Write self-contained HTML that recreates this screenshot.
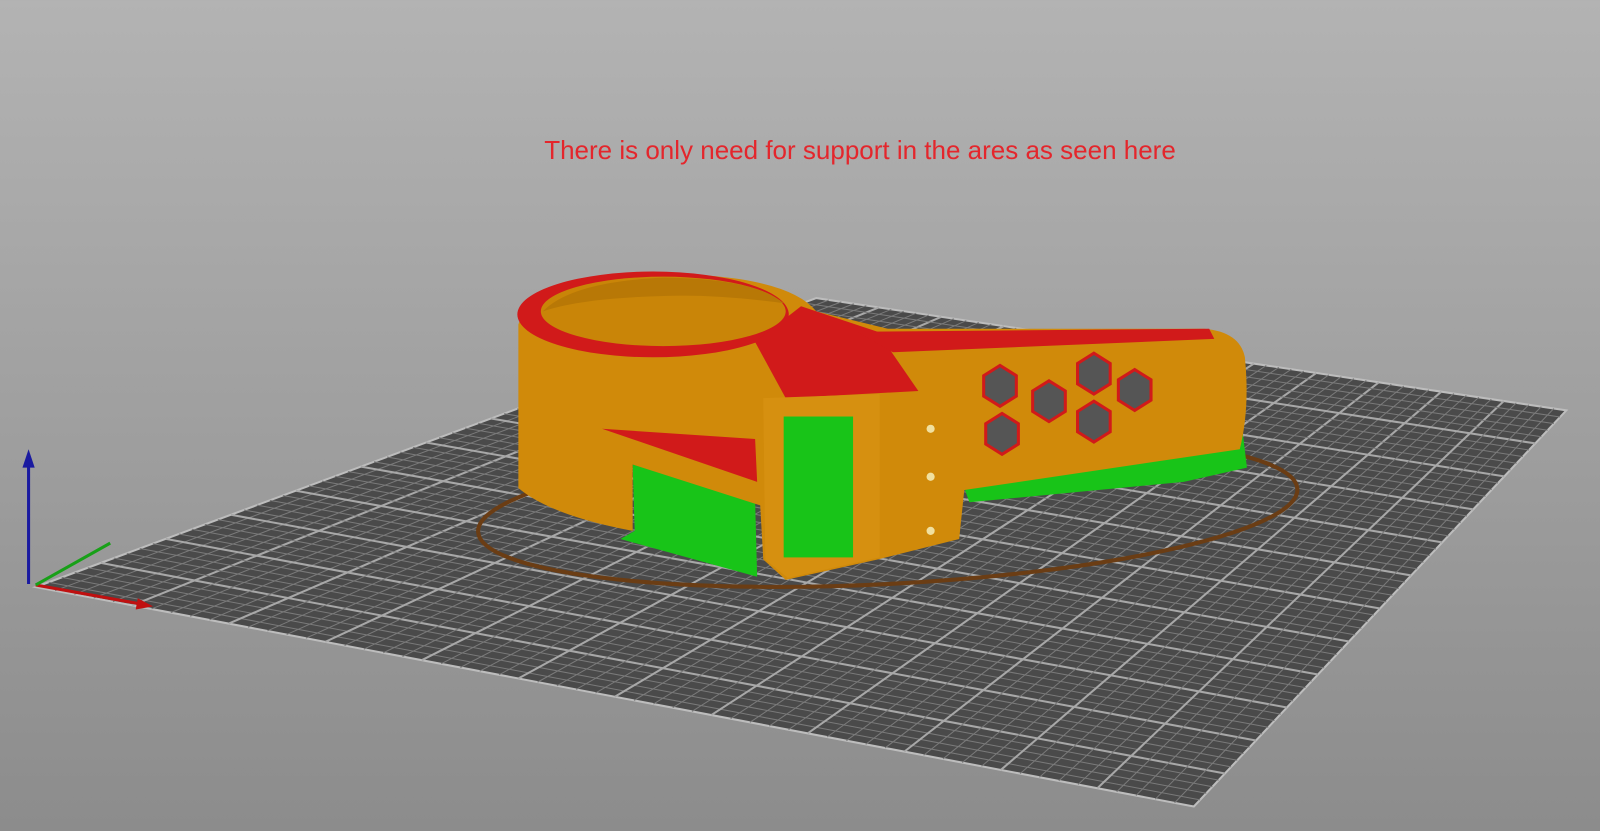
<!DOCTYPE html>
<html><head><meta charset="utf-8"><style>
html,body{margin:0;padding:0;width:1600px;height:831px;overflow:hidden}
body{background:linear-gradient(#b3b3b3,#8c8c8c)}
svg{position:absolute;left:0;top:0}
.t{position:absolute;left:0;width:1720px;top:135px;text-align:center;font:26px "Liberation Sans",sans-serif;color:#e4262c}
</style></head><body>
<svg id="s" width="1600" height="831" viewBox="0 0 1568 814" preserveAspectRatio="none">
<polygon points="35,575 800,292 1535,402 1170,790" fill="#4a4a4a" stroke="#bdbdbd" stroke-width="2"/>
<g id="g" stroke-width="1"></g>
<ellipse cx="870" cy="500" rx="402" ry="72" transform="rotate(-3 870 500)" fill="none" stroke="#6b3d14" stroke-width="4"/>
<polygon points="945,478 1215,400 1222,458 1160,472 950,492" fill="#18c418"/>
<polygon points="620,455 740,490 742,565 608,528 622,520" fill="#18c418"/>
<path d="M508,318 L508,478 Q540,505 620,520 L620,455 L745,495 L748,548 L770,568 L860,548 L940,528 L945,480 L1215,440 Q1225,400 1220,350 Q1215,325 1180,322 L870,322 L800,305 Q770,268 640,268 Q520,272 508,318 Z" fill="#d08a0a"/>
<ellipse cx="640" cy="308" rx="133" ry="42" fill="#d11a1a"/>
<polygon points="740,335 785,300 860,325 900,383 770,390" fill="#d11a1a"/>
<ellipse cx="650" cy="305" rx="120" ry="34" fill="#c98508"/>
<path d="M532,305 Q560,276 650,272 Q740,273 768,297 Q700,288 650,290 Q570,292 532,305Z" fill="#b87806"/>
<polygon points="840,325 1185,322 1190,332 875,345" fill="#d11a1a"/>
<polygon points="748,390 862,386 862,546 772,566 750,548" fill="#d69010"/>
<rect x="768" y="408" width="68" height="138" fill="#18c418"/>
<polygon points="590,420 740,430 742,472" fill="#d11a1a"/>
<g fill="#555" stroke="#d11a1a" stroke-width="3">
<polygon points="980,358 996,368 996,388 980,398 964,388 964,368"/>
<polygon points="1028,373 1044,383 1044,403 1028,413 1012,403 1012,383"/>
<polygon points="1072,346 1088,356 1088,376 1072,386 1056,376 1056,356"/>
<polygon points="1112,362 1128,372 1128,392 1112,402 1096,392 1096,372"/>
<polygon points="982,405 998,415 998,435 982,445 966,435 966,415"/>
<polygon points="1072,393 1088,403 1088,423 1072,433 1056,423 1056,403"/>
</g>
<circle cx="912" cy="420" r="4" fill="#f0e0a0"/><circle cx="912" cy="467" r="4" fill="#f0e0a0"/><circle cx="912" cy="520" r="4" fill="#f0e0a0"/>
<line x1="28" y1="572" x2="28" y2="452" stroke="#1a1aa0" stroke-width="3"/>
<polygon points="22,458 28,440 34,458" fill="#1a1aa0"/>
<line x1="35" y1="573" x2="140" y2="592" stroke="#c01010" stroke-width="3"/>
<polygon points="135,586 150,594 133,597" fill="#c01010"/>
<line x1="35" y1="573" x2="108" y2="532" stroke="#18a018" stroke-width="3"/>
</svg>
<div class="t">There is only need for support in the ares as seen here</div>
<script>
var L=[35,575],B=[800,292],R=[1535,402],F=[1170,790],g=document.getElementById('g'),h='';
function lp(a,b,t){return [a[0]+(b[0]-a[0])*t,a[1]+(b[1]-a[1])*t]}
var N=60;
for(var i=1;i<N;i++){var t=i/N,c=(i%5==0)?'#a8a8a8':'#7a7a7a',w=(i%5==0)?2:1;
var p=lp(L,B,t),q=lp(F,R,t);h+='<line x1="'+p[0]+'" y1="'+p[1]+'" x2="'+q[0]+'" y2="'+q[1]+'" stroke="'+c+'" stroke-width="'+w+'"/>';
p=lp(L,F,t);q=lp(B,R,t);h+='<line x1="'+p[0]+'" y1="'+p[1]+'" x2="'+q[0]+'" y2="'+q[1]+'" stroke="'+c+'" stroke-width="'+w+'"/>';}
g.innerHTML=h;
</script>
</body></html>
